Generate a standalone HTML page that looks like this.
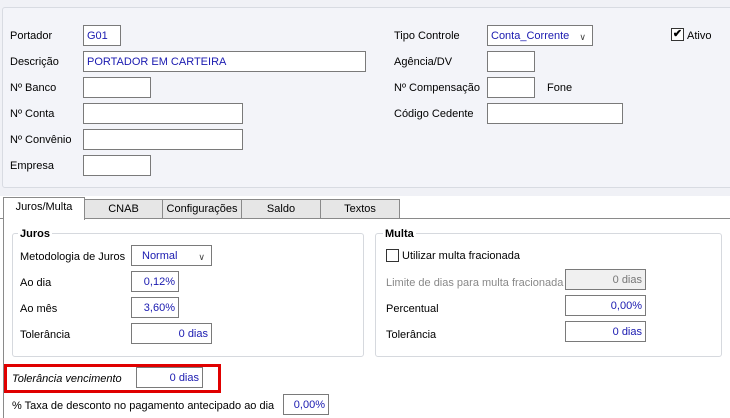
<!DOCTYPE html>
<html><head><meta charset="utf-8"><style>
body{margin:0;width:730px;height:416px;background:#fff;font-family:"Liberation Sans",sans-serif;font-size:11px;color:#000;position:relative;overflow:hidden}
div,span{position:absolute;box-sizing:border-box}
.l{white-space:nowrap;line-height:14px}
.i{border:1px solid #7a7a7a;background:#fff;height:21px;color:#1a1ab0;line-height:20px;padding:0 3px;white-space:nowrap}
.r{text-align:right}
.tab{top:199px;height:20px;border:1px solid #8a8a8a;background:#e6e6e6;text-align:center;line-height:19px}
.g{border:1px solid #d6d9de;border-radius:3px}
.gt{background:#fff;font-weight:bold;padding:0 2px;line-height:14px}
.dd{right:6px;top:1px;font-size:9px;color:#444}
</style></head><body>
<div style="left:0;top:0;width:730px;height:196px;background:#f0f1f6"></div>
<div style="left:2px;top:7px;width:740px;height:181px;border:1px solid #d8dbe2;background:#f3f4f9;border-radius:3px"></div>
<span class="l" style="left:10px;top:29px">Portador</span>
<div class="i" style="left:83px;top:25px;width:38px">G01</div>
<span class="l" style="left:10px;top:55px">Descrição</span>
<div class="i" style="left:83px;top:51px;width:283px">PORTADOR EM CARTEIRA</div>
<span class="l" style="left:10px;top:81px">Nº Banco</span>
<div class="i" style="left:83px;top:77px;width:68px"></div>
<span class="l" style="left:10px;top:107px">Nº Conta</span>
<div class="i" style="left:83px;top:103px;width:160px"></div>
<span class="l" style="left:10px;top:133px">Nº Convênio</span>
<div class="i" style="left:83px;top:129px;width:160px"></div>
<span class="l" style="left:10px;top:159px">Empresa</span>
<div class="i" style="left:83px;top:155px;width:68px"></div>

<span class="l" style="left:394px;top:29px">Tipo Controle</span>
<div class="i" style="left:487px;top:25px;width:106px">Conta_Corrente<span class="dd">&#8744;</span></div>
<span class="l" style="left:394px;top:55px">Agência/DV</span>
<div class="i" style="left:487px;top:51px;width:48px"></div>
<span class="l" style="left:394px;top:81px">Nº Compensação</span>
<div class="i" style="left:487px;top:77px;width:48px"></div>
<span class="l" style="left:547px;top:81px">Fone</span>
<span class="l" style="left:394px;top:107px">Código Cedente</span>
<div class="i" style="left:487px;top:103px;width:136px"></div>
<div style="left:671px;top:28px;width:13px;height:13px;border:1px solid #333;background:#fff;font-size:11px;line-height:11px;text-align:center;font-weight:bold">&#10004;</div>
<span class="l" style="left:687px;top:29px">Ativo</span>

<div style="left:0;top:218px;width:730px;height:1px;background:#8a8a8a"></div>
<div style="left:3px;top:218px;width:1px;height:200px;background:#8a8a8a"></div>
<div class="tab" style="left:84px;width:79px">CNAB</div>
<div class="tab" style="left:162px;width:80px">Configurações</div>
<div class="tab" style="left:241px;width:80px">Saldo</div>
<div class="tab" style="left:320px;width:80px">Textos</div>
<div class="tab" style="left:3px;top:197px;width:82px;height:23px;background:#fff;border-bottom:none;line-height:19px">Juros/Multa</div>

<div class="g" style="left:12px;top:233px;width:352px;height:124px"></div>
<span class="l gt" style="left:18px;top:227px">Juros</span>
<span class="l" style="left:20px;top:250px">Metodologia de Juros</span>
<div class="i" style="left:131px;top:245px;width:81px;padding-left:10px">Normal<span class="dd">&#8744;</span></div>
<span class="l" style="left:20px;top:276px">Ao dia</span>
<div class="i r" style="left:131px;top:271px;width:48px">0,12%</div>
<span class="l" style="left:20px;top:302px">Ao mês</span>
<div class="i r" style="left:131px;top:297px;width:48px">3,60%</div>
<span class="l" style="left:20px;top:328px">Tolerância</span>
<div class="i r" style="left:131px;top:323px;width:81px">0 dias</div>

<div class="g" style="left:375px;top:233px;width:347px;height:124px"></div>
<span class="l gt" style="left:383px;top:227px">Multa</span>
<div style="left:386px;top:249px;width:13px;height:13px;border:1px solid #333;background:#fff"></div>
<span class="l" style="left:402px;top:249px">Utilizar multa fracionada</span>
<span class="l" style="left:386px;top:276px;color:#888">Limite de dias para multa fracionada</span>
<div class="i r" style="left:565px;top:269px;width:81px;background:#f0f0f0;color:#777">0 dias</div>
<span class="l" style="left:386px;top:302px">Percentual</span>
<div class="i r" style="left:565px;top:295px;width:81px">0,00%</div>
<span class="l" style="left:386px;top:328px">Tolerância</span>
<div class="i r" style="left:565px;top:321px;width:81px">0 dias</div>

<div style="left:4px;top:364px;width:217px;height:29px;border:3px solid #e00000"></div>
<span class="l" style="left:12px;top:372px;font-style:italic">Tolerância vencimento</span>
<div class="i r" style="left:136px;top:367px;width:67px">0 dias</div>
<span class="l" style="left:12px;top:399px">% Taxa de desconto no pagamento antecipado ao dia</span>
<div class="i r" style="left:283px;top:394px;width:46px">0,00%</div>
</body></html>
